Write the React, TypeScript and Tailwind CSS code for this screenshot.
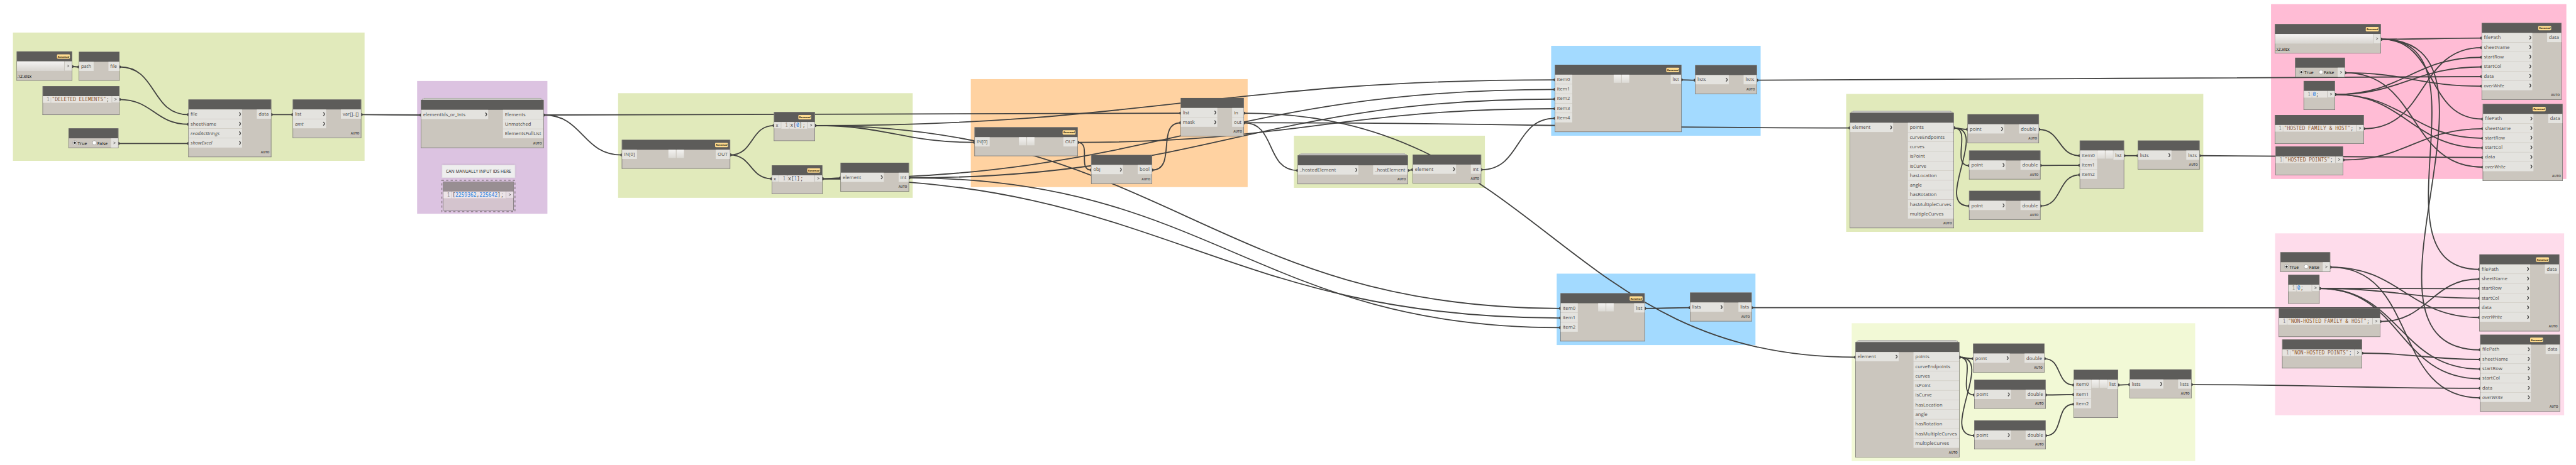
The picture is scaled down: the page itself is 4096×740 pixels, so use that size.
import type { ReactNode } from "react";

const HEADER = 27;
const ROW = 26;

type Port = string | { label: string; optional: true };

interface GroupData {
  x: number;
  y: number;
  r: number;
  b: number;
  tone: string;
}

interface NodeData {
  x: number;
  y: number;
  r: number;
  ins: Port[];
  inRight: number;
  outs: string[];
  outLeft: number;
  lacing?: boolean;
  chevrons?: boolean;
  stacked?: boolean;
  buttons?: number;
  badge?: number;
}

interface CodeData {
  x: number;
  y: number;
  r: number;
  input?: string;
  inputRight?: number;
  badge?: number;
  frozen?: boolean;
  code: ReactNode;
}

const opt = (label: string): Port => ({ label, optional: true });

const groups: GroupData[] = [
  { x: 35, y: 88, r: 985, b: 435, tone: "bg-[#e1eabb]" },
  { x: 1127, y: 219, r: 1479, b: 578, tone: "bg-[#dcc3e1]" },
  { x: 1670, y: 252, r: 2466, b: 535, tone: "bg-[#e1eabb]" },
  { x: 2623, y: 214, r: 3371, b: 506, tone: "bg-[#ffd2a1]" },
  { x: 3496, y: 367, r: 4012, b: 508, tone: "bg-[#e1eabb]" },
  { x: 4191, y: 124, r: 4757, b: 367, tone: "bg-[#a3daff]" },
  { x: 4206, y: 740, r: 4743, b: 933, tone: "bg-[#a3daff]" },
  { x: 4988, y: 254, r: 5953, b: 627, tone: "bg-[#e1eabb]" },
  { x: 5003, y: 874, r: 5931, b: 1247, tone: "bg-[#f2f9d6]" },
  { x: 6136, y: 11, r: 6934, b: 484, tone: "bg-[#ffbcd5]" },
  { x: 6147, y: 631, r: 6928, b: 1123, tone: "bg-[#fedceb]" },
];

const writeIns: Port[] = ["filePath", "sheetName", "startRow", "startCol", "data", opt("overWrite")];
const locationOuts = [
  "points",
  "curveEndpoints",
  "curves",
  "isPoint",
  "isCurve",
  "hasLocation",
  "angle",
  "hasRotation",
  "hasMultipleCurves",
  "multipleCurves",
];

const nodes: NodeData[] = [
  { x: 213, y: 140, r: 323, ins: ["path"], inRight: 253, outs: ["file"], outLeft: 293 },
  { x: 509, y: 269, r: 733, ins: ["file", "sheetName", opt("readAsStrings"), opt("showExcel")], inRight: 654, outs: ["data"], outLeft: 694, lacing: true, chevrons: true },
  { x: 791, y: 269, r: 976, ins: ["list", opt("amt")], inRight: 881, outs: ["var[]..[]"], outLeft: 921, lacing: true, chevrons: true },
  { x: 1137, y: 270, r: 1469, ins: ["elementIds_or_Ints"], inRight: 1319, outs: ["Elements", "Unmatched", "ElementsFullList"], outLeft: 1359, lacing: true, chevrons: true, stacked: true },
  { x: 1680, y: 378, r: 1973, ins: ["IN[0]"], inRight: 1721, outs: ["OUT"], outLeft: 1934, buttons: 1806, badge: 1932 },
  { x: 2271, y: 440, r: 2456, ins: ["element"], inRight: 2388, outs: ["int"], outLeft: 2428, lacing: true, chevrons: true },
  { x: 2633, y: 344, r: 2912, ins: ["IN[0]"], inRight: 2674, outs: ["OUT"], outLeft: 2873, buttons: 2753, badge: 2871 },
  { x: 2948, y: 419, r: 3113, ins: ["obj"], inRight: 3034, outs: ["bool"], outLeft: 3074, lacing: true, chevrons: true },
  { x: 3190, y: 265, r: 3361, ins: ["list", "mask"], inRight: 3289, outs: ["in", "out"], outLeft: 3329, lacing: true, chevrons: true },
  { x: 3506, y: 420, r: 3804, ins: ["_hostedElement"], inRight: 3670, outs: ["_hostElement"], outLeft: 3710, lacing: true, chevrons: true, stacked: true },
  { x: 3817, y: 418, r: 4002, ins: ["element"], inRight: 3934, outs: ["int"], outLeft: 3974, lacing: true, chevrons: true },
  { x: 4201, y: 175, r: 4543, ins: ["item0", "item1", "item2", "item3", "item4"], inRight: 4248, outs: ["list"], outLeft: 4514, buttons: 4360, badge: 4502 },
  { x: 4580, y: 176, r: 4747, ins: ["lists"], inRight: 4671, outs: ["lists"], outLeft: 4711, lacing: true, chevrons: true },
  { x: 4216, y: 793, r: 4444, ins: ["item0", "item1", "item2"], inRight: 4263, outs: ["list"], outLeft: 4415, buttons: 4318, badge: 4403 },
  { x: 4566, y: 791, r: 4733, ins: ["lists"], inRight: 4657, outs: ["lists"], outLeft: 4697, lacing: true, chevrons: true },
  { x: 4998, y: 305, r: 5279, ins: ["element"], inRight: 5115, outs: locationOuts, outLeft: 5155, lacing: true, chevrons: true, stacked: true },
  { x: 5316, y: 309, r: 5509, ins: ["point"], inRight: 5415, outs: ["double"], outLeft: 5455, lacing: true, chevrons: true },
  { x: 5320, y: 407, r: 5513, ins: ["point"], inRight: 5419, outs: ["double"], outLeft: 5459, lacing: true, chevrons: true },
  { x: 5320, y: 516, r: 5513, ins: ["point"], inRight: 5419, outs: ["double"], outLeft: 5459, lacing: true, chevrons: true },
  { x: 5619, y: 380, r: 5739, ins: ["item0", "item1", "item2"], inRight: 5666, outs: ["list"], outLeft: 5710, buttons: 5667 },
  { x: 5776, y: 380, r: 5943, ins: ["lists"], inRight: 5867, outs: ["lists"], outLeft: 5907, lacing: true, chevrons: true },
  { x: 5013, y: 925, r: 5294, ins: ["element"], inRight: 5130, outs: locationOuts, outLeft: 5170, lacing: true, chevrons: true, stacked: true },
  { x: 5331, y: 929, r: 5524, ins: ["point"], inRight: 5430, outs: ["double"], outLeft: 5470, lacing: true, chevrons: true },
  { x: 5334, y: 1027, r: 5527, ins: ["point"], inRight: 5433, outs: ["double"], outLeft: 5473, lacing: true, chevrons: true },
  { x: 5334, y: 1137, r: 5527, ins: ["point"], inRight: 5433, outs: ["double"], outLeft: 5473, lacing: true, chevrons: true },
  { x: 5603, y: 1000, r: 5723, ins: ["item0", "item1", "item2"], inRight: 5650, outs: ["list"], outLeft: 5694, buttons: 5651 },
  { x: 5754, y: 999, r: 5921, ins: ["lists"], inRight: 5845, outs: ["lists"], outLeft: 5885, lacing: true, chevrons: true },
  { x: 6705, y: 62, r: 6921, ins: writeIns, inRight: 6842, outs: ["data"], outLeft: 6882, lacing: true, chevrons: true, badge: 6858 },
  { x: 6708, y: 281, r: 6924, ins: writeIns, inRight: 6845, outs: ["data"], outLeft: 6885, lacing: true, chevrons: true, badge: 6843 },
  { x: 6699, y: 688, r: 6915, ins: writeIns, inRight: 6836, outs: ["data"], outLeft: 6876, lacing: true, chevrons: true, badge: 6852 },
  { x: 6701, y: 905, r: 6917, ins: writeIns, inRight: 6838, outs: ["data"], outLeft: 6878, lacing: true, chevrons: true, badge: 6836 },
];

const Str = ({ children }: { children: string }) => <span className="text-[#8a5530]">{children}</span>;
const Num = ({ children }: { children: string }) => <span className="text-[#2080e2]">{children}</span>;

const codeBlocks: CodeData[] = [
  { x: 115, y: 233, r: 323, code: <><Str>{'"DELETED ELEMENTS"'}</Str>;</> },
  { x: 1197, y: 491, r: 1388, frozen: true, code: <>[<Num>2259362</Num>,<Num>225642</Num>];</> },
  { x: 2091, y: 303, r: 2202, input: "x", inputRight: 2110, badge: 2157, code: <>x[<Num>0</Num>];</> },
  { x: 2085, y: 447, r: 2222, input: "x", inputRight: 2104, badge: 2181, code: <>x[<Num>1</Num>];</> },
  { x: 6224, y: 219, r: 6309, code: <><Num>0</Num>;</> },
  { x: 6146, y: 311, r: 6387, code: <><Str>{'"HOSTED FAMILY & HOST"'}</Str>;</> },
  { x: 6148, y: 396, r: 6331, code: <><Str>{'"HOSTED POINTS"'}</Str>;</> },
  { x: 6182, y: 743, r: 6267, code: <><Num>0</Num>;</> },
  { x: 6157, y: 833, r: 6431, code: <><Str>{'"NON-HOSTED FAMILY & HOST"'}</Str>;</> },
  { x: 6166, y: 918, r: 6382, code: <><Str>{'"NON-HOSTED POINTS"'}</Str>;</> },
];

type Wire = [number, number, number, number];

const wires: Wire[] = [
  [195, 180, 213, 181],
  [323, 181, 509, 310],
  [323, 269, 509, 336],
  [320, 388, 509, 388],
  [733, 310, 791, 310],
  [976, 310, 1137, 311],
  [1469, 311, 3190, 306],
  [1469, 311, 1680, 419],
  [1973, 419, 2091, 339.5],
  [1973, 419, 2085, 483.5],
  [2202, 339.5, 4201, 216],
  [2202, 339.5, 2633, 385],
  [2202, 339.5, 4216, 834],
  [2222, 483.5, 2271, 481],
  [2222, 483.5, 4201, 242],
  [2222, 483.5, 4216, 860],
  [2456, 481, 4201, 268],
  [2456, 481, 4216, 886],
  [2912, 385, 4201, 294],
  [2912, 385, 2948, 460],
  [3113, 460, 3190, 332],
  [3361, 306, 5013, 966],
  [3361, 332, 4998, 346],
  [3361, 332, 3506, 461],
  [3804, 461, 3817, 459],
  [4002, 459, 4201, 320],
  [4543, 216, 4580, 217],
  [4747, 217, 6705, 207],
  [4444, 834, 4566, 832],
  [4733, 832, 6699, 832.5],
  [5279, 346, 5316, 350],
  [5279, 346, 5320, 448],
  [5279, 346, 5320, 557],
  [5509, 350, 5619, 421],
  [5513, 447.5, 5619, 447],
  [5513, 557, 5619, 473],
  [5739, 421, 5776, 421],
  [5943, 421, 6708, 426],
  [5294, 966, 5331, 970],
  [5294, 966, 5334, 1068],
  [5294, 966, 5334, 1178],
  [5524, 970, 5603, 1041],
  [5527, 1068, 5603, 1067],
  [5527, 1178, 5603, 1093],
  [5723, 1041, 5754, 1040],
  [5921, 1040, 6701, 1050],
  [6433, 106, 6705, 103],
  [6433, 106, 6708, 322],
  [6433, 106, 6699, 728.5],
  [6433, 106, 6701, 946],
  [6336, 197, 6705, 233],
  [6336, 197, 6708, 452],
  [6309, 255.5, 6705, 155],
  [6309, 255.5, 6705, 181],
  [6309, 255.5, 6708, 374],
  [6309, 255.5, 6708, 400],
  [6387, 348, 6705, 129],
  [6331, 432.5, 6708, 348],
  [6296, 722.5, 6699, 858.5],
  [6296, 722.5, 6701, 1076],
  [6267, 780, 6699, 780.5],
  [6267, 780, 6699, 806.5],
  [6267, 780, 6701, 998],
  [6267, 780, 6701, 1024],
  [6431, 869.5, 6699, 754.5],
  [6382, 955, 6701, 972],
];

const wirePath = ([x0, y0, x1, y1]: Wire) => {
  const offset = 0.45 * Math.hypot(x1 - x0, y1 - y0);
  return `M${x0} ${y0}C${x0 + offset} ${y0} ${x1 - offset} ${y1} ${x1} ${y1}`;
};

function Wires() {
  return (
    <svg className="absolute inset-0" width="6960" height="1258" viewBox="0 0 6960 1258" fill="none">
      {wires.map((w) => (
        <g key={w.join()}>
          <path d={wirePath(w)} stroke="#424241" strokeWidth="3.1" />
          <circle cx={w[0]} cy={w[1]} r="4" fill="#424241" />
          <circle cx={w[2]} cy={w[3]} r="4" fill="#424241" />
        </g>
      ))}
    </svg>
  );
}

function Badge({ left }: { left: number }) {
  return (
    <span
      className="absolute top-[8px] flex h-[12px] w-[35px] items-center justify-center rounded-[2.5px] bg-[#ffdc91] text-[7px] leading-none font-bold text-[#33290f] italic"
      style={{ left }}
    >
      Renamed
    </span>
  );
}

function Frame({ x, y, r, badge, children }: { x: number; y: number; r: number; badge?: number; children: ReactNode }) {
  return (
    <div className="absolute border-x border-b border-[#5d5c5a] bg-[#cbc6be]" style={{ left: x, top: y, width: r - x }}>
      <div className="h-[27px] bg-[#5d5c5a]" />
      {badge !== undefined && <Badge left={badge - x - 1} />}
      {children}
    </div>
  );
}

function Chevron() {
  return (
    <svg className="mr-[2px] h-[11px] w-[7px] shrink-0" viewBox="0 0 7 11" fill="none">
      <path d="M1.2 0.8C3.4 2 4.6 4 4.9 5.5C4.6 7 3.4 9 1.2 10.2" stroke="#4d4c4b" strokeWidth="2.5" />
    </svg>
  );
}

function PortCell({ port, chevron }: { port: Port; chevron?: boolean }) {
  const label = typeof port === "string" ? port : port.label;
  const italic = typeof port === "string" ? "" : "italic";
  return (
    <div className="flex h-[25px] items-center justify-between bg-[#e4e3df] pl-[5px]">
      <span className={`text-[13px] leading-none whitespace-nowrap text-[#4b4a49] ${italic}`}>{label}</span>
      {chevron && <Chevron />}
    </div>
  );
}

function Arrow({ tall, tone }: { tall?: boolean; tone: string }) {
  return (
    <div className={`flex w-[19px] items-center justify-center ${tall ? "h-[25px]" : "h-[17px]"} ${tone}`}>
      <svg className="h-[7px] w-[7px]" viewBox="0 0 7 7" fill="none">
        <path d="M0.4 0.6L6 3.4L0.4 6.3" stroke="#4d4c4b" strokeWidth="1.2" />
      </svg>
    </div>
  );
}

function FunctionNode(n: NodeData) {
  const rows = Math.max(n.ins.length, n.outs.length);
  return (
    <>
      {n.stacked && (
        <>
          <div className="absolute h-[6px] border border-[#a2a19e] bg-[#dfdeda]" style={{ left: n.x + 8, top: n.y - 5, width: n.r - n.x - 16 }} />
          <div className="absolute h-[6px] border border-[#7f7e7b] bg-[#dfdeda]" style={{ left: n.x + 4, top: n.y - 3, width: n.r - n.x - 8 }} />
        </>
      )}
      <Frame x={n.x} y={n.y} r={n.r} badge={n.badge}>
        <div className="flex items-start justify-between" style={{ height: rows * ROW }}>
          <div className="flex flex-col gap-px" style={{ width: n.inRight - n.x - 1 }}>
            {n.ins.map((p, i) => (
              <PortCell key={i} port={p} chevron={n.chevrons} />
            ))}
          </div>
          <div className="flex flex-col gap-px" style={{ width: n.r - n.outLeft - 1 }}>
            {n.outs.map((p) => (
              <PortCell key={p} port={p} />
            ))}
          </div>
        </div>
        {n.buttons !== undefined && (
          <div className="absolute flex gap-[2px]" style={{ left: n.buttons - n.x - 1, top: HEADER }}>
            <div className="h-[22px] w-[20px] bg-gradient-to-b from-[#f3f2f0] to-[#dcdad5]" />
            <div className="h-[22px] w-[20px] bg-gradient-to-b from-[#f3f2f0] to-[#dcdad5]" />
          </div>
        )}
        <div className="flex h-[24px] items-center justify-end pr-[4px]">
          {n.lacing && <span className="text-[8.3px] leading-none font-bold text-[#4d4c4b]">AUTO</span>}
        </div>
      </Frame>
    </>
  );
}

function CodeBlock(c: CodeData) {
  return (
    <div
      className={`absolute border-x border-b border-[#5d5c5a] ${c.frozen ? "border-t bg-[#d4c4ce]" : "bg-[#cbc6be]"}`}
      style={{ left: c.x, top: c.y, width: c.r - c.x }}
    >
      <div className={c.frozen ? "h-[26px] bg-[#988e92]" : "h-[27px] bg-[#5d5c5a]"} />
      {c.badge !== undefined && <Badge left={c.badge - c.x - 1} />}
      <div className="flex h-[50px] items-start">
        {c.input && (
          <div
            className="flex h-[17px] items-center border-r border-[#b3b0ab] bg-[#e4e3df] pl-[4px] text-[13px] leading-none text-[#4b4a49]"
            style={{ width: (c.inputRight ?? c.x) - c.x }}
          >
            {c.input}
          </div>
        )}
        <div className={`flex h-[18px] flex-1 items-stretch ${c.frozen ? "bg-[#ece4e8]" : "bg-[#e6e3df]"}`}>
          <span className="flex w-[22px] items-center justify-end border-r border-dotted border-[#a5a29e] pr-[3px] font-['Noto_Sans_Mono','DejaVu_Sans_Mono',monospace] text-[13.6px] leading-none text-[#8a8885]">
            1
          </span>
          <span className="flex items-center pl-[2px] font-['Noto_Sans_Mono','DejaVu_Sans_Mono',monospace] text-[13.6px] leading-none whitespace-pre text-[#3c3b3a]">
            {c.code}
          </span>
        </div>
        <div className="border-l border-[#b3b0ab]">
          <Arrow tone={c.frozen ? "bg-[#e8dee5]" : "bg-[#e4e3df]"} />
        </div>
      </div>
    </div>
  );
}

function Radio({ checked }: { checked?: boolean }) {
  return (
    <span className="flex size-[12px] shrink-0 items-center justify-center rounded-full border border-[#7c7b79] bg-white">
      {checked && <span className="size-[6px] rounded-full bg-[#222222]" />}
    </span>
  );
}

function BooleanNode({ x, y, r }: { x: number; y: number; r: number }) {
  return (
    <Frame x={x} y={y} r={r}>
      <div className="flex h-[25px] items-center justify-between">
        <div className="flex items-center pl-[10px] text-[11.7px] leading-none text-black">
          <Radio checked />
          <span className="mt-[3px] ml-[2px] w-[39px]">True</span>
          <Radio />
          <span className="mt-[3px] ml-[2px]">False</span>
        </div>
        <Arrow tall tone="bg-[#e4e3df]" />
      </div>
    </Frame>
  );
}

function FilePathNode({ x, y, r, badge }: { x: number; y: number; r: number; badge: number }) {
  return (
    <Frame x={x} y={y} r={r} badge={badge}>
      <div className="flex h-[26px] items-start">
        <div className="h-[26px] flex-1 bg-gradient-to-b from-[#f4f3f2] to-[#d8d5d0]" />
        <div className="border-l border-[#c4c0ba]">
          <Arrow tall tone="bg-[#e4e3df]" />
        </div>
      </div>
      <div className="flex h-[25px] items-center pl-px text-[11.8px] leading-none text-black">
        <span className="mt-[4px]">{".\\2.xlsx"}</span>
      </div>
    </Frame>
  );
}

export default function App() {
  return (
    <main className="h-[740px] w-[4096px] overflow-hidden bg-white">
      <div className="relative h-[1258px] w-[6960px] origin-top-left scale-[0.588506] bg-white font-['Open_Sans','Noto_Sans',sans-serif]">
        {groups.map((g) => (
          <div key={g.x} className={`absolute ${g.tone}`} style={{ left: g.x, top: g.y, width: g.r - g.x, height: g.b - g.y }} />
        ))}
        <Wires />
        {nodes.map((n) => (
          <FunctionNode key={`${n.x}-${n.y}`} {...n} />
        ))}
        {codeBlocks.map((c) => (
          <CodeBlock key={`${c.x}-${c.y}`} {...c} />
        ))}
        <FilePathNode x={45} y={139} r={195} badge={154} />
        <FilePathNode x={6146} y={65} r={6433} badge={6392} />
        <BooleanNode x={185} y={347} r={320} />
        <BooleanNode x={6201} y={156} r={6336} />
        <BooleanNode x={6161} y={682} r={6296} />
        <div className="absolute top-[446px] left-[1194px] flex h-[35px] w-[198px] items-center justify-center border border-[#dcd6de] bg-[#eeeeee] text-[11.6px] leading-none whitespace-nowrap text-[#222222] shadow-[0_0_5px_rgba(80,50,90,0.35)]">
          CAN MANUALLY INPUT IDS HERE
        </div>
        <svg className="absolute top-[486px] left-[1192px]" width="201" height="88" viewBox="0 0 201 88" fill="none">
          <rect x="1.5" y="1.5" width="198" height="85" stroke="#93858f" strokeWidth="3" strokeDasharray="6 6" />
        </svg>
      </div>
    </main>
  );
}
